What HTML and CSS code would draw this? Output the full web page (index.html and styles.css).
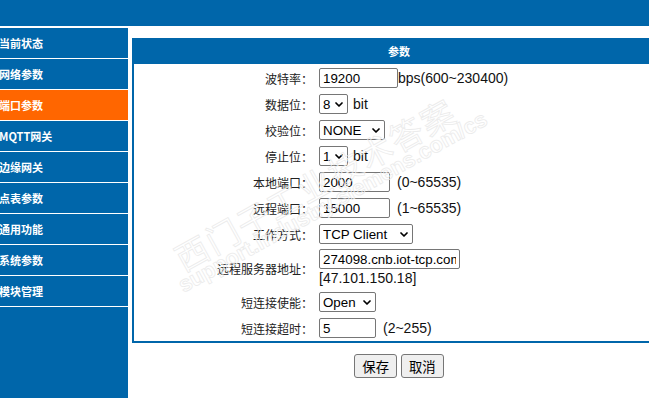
FILE: index.html
```html
<!DOCTYPE html>
<html lang="zh-CN">
<head>
<meta charset="utf-8">
<title>端口参数</title>
<link rel="stylesheet" href="styles.css">
</head>
<body>
<div class="topbar"></div>
<div class="layout">
  <nav class="sidebar">
    <div class="nav-item">当前状态</div>
    <div class="nav-item">网络参数</div>
    <div class="nav-item active">端口参数</div>
    <div class="nav-item">MQTT网关</div>
    <div class="nav-item">边缘网关</div>
    <div class="nav-item">点表参数</div>
    <div class="nav-item">通用功能</div>
    <div class="nav-item">系统参数</div>
    <div class="nav-item">模块管理</div>
  </nav>
  <main class="content">
    <div class="panel">
      <div class="panel-head">参数</div>
      <div class="form">
        <div class="row"><div class="lbl">波特率：</div><div class="ctl"><input class="inp w79" value="19200"><span class="unit tight">bps(600~230400)</span></div></div>
        <div class="row"><div class="lbl">数据位：</div><div class="ctl"><span class="selwrap"><select class="sel w29"><option>8</option></select><svg class="chev" viewBox="0 0 8 5"><path d="M1 1L4 4L7 1"/></svg></span><span class="unit">bit</span></div></div>
        <div class="row"><div class="lbl">校验位：</div><div class="ctl"><span class="selwrap"><select class="sel w66"><option>NONE</option></select><svg class="chev" viewBox="0 0 8 5"><path d="M1 1L4 4L7 1"/></svg></span></div></div>
        <div class="row"><div class="lbl">停止位：</div><div class="ctl"><span class="selwrap"><select class="sel w29"><option>1</option></select><svg class="chev" viewBox="0 0 8 5"><path d="M1 1L4 4L7 1"/></svg></span><span class="unit">bit</span></div></div>
        <div class="row"><div class="lbl">本地端口：</div><div class="ctl"><input class="inp w71" value="2000"><span class="unit wide">(0~65535)</span></div></div>
        <div class="row"><div class="lbl">远程端口：</div><div class="ctl"><input class="inp w71" value="15000"><span class="unit wide">(1~65535)</span></div></div>
        <div class="row"><div class="lbl">工作方式：</div><div class="ctl"><span class="selwrap"><select class="sel w94"><option>TCP Client</option></select><svg class="chev" viewBox="0 0 8 5"><path d="M1 1L4 4L7 1"/></svg></span></div></div>
        <div class="row tall"><div class="lbl">远程服务器地址：</div><div class="ctl stack"><input class="inp w141" value="274098.cnb.iot-tcp.com"><span class="ip">[47.101.150.18]</span></div></div>
        <div class="row"><div class="lbl">短连接使能：</div><div class="ctl"><span class="selwrap"><select class="sel w57"><option>Open</option></select><svg class="chev" viewBox="0 0 8 5"><path d="M1 1L4 4L7 1"/></svg></span></div></div>
        <div class="row"><div class="lbl">短连接超时：</div><div class="ctl"><input class="inp w57" value="5"><span class="unit wide">(2~255)</span></div></div>
      </div>
    </div>
    <div class="actions"><button class="btn">保存</button><button class="btn">取消</button></div>
  </main>
</div>
<div class="watermark wm-cn">西门子工业技术答案</div>
<div class="watermark wm-en">support.industry.siemens.com/cs</div>
</body>
</html>
```
FILE: styles.css
```css
html, body {
  margin: 0;
  padding: 0;
  width: 649px;
  height: 398px;
  overflow: hidden;
  background: #fff;
  font-family: "Liberation Sans", Arial, "Noto Sans CJK SC", sans-serif;
  color: #222;
}
.topbar {
  height: 26px;
  background: #0066aa;
}
.layout {
  margin-top: 2px;
  display: flex;
  height: 370px;
}
.sidebar {
  width: 128px;
  flex: none;
  background: #0066aa;
}
.nav-item {
  height: 30px;
  line-height: 30px;
  border-bottom: 1px solid #fff;
  color: #fff;
  font-family: "Noto Sans CJK SC", "Liberation Sans", sans-serif;
  font-weight: bold;
  font-size: 11px;
  text-indent: -1px;
  white-space: nowrap;
  overflow: hidden;
}
.nav-item.active {
  background: #ff6600;
}
.content {
  flex: none;
  padding: 10px 0 0 4px;
  width: 540px;
}
.panel {
  width: 530px;
  border: 2px solid #0066aa;
  border-top: 0;
}
.panel-head {
  height: 26px;
  line-height: 26px;
  background: #0066aa;
  color: #fff;
  text-align: center;
  font-family: "Noto Sans CJK SC", sans-serif;
  font-weight: bold;
  font-size: 11px;
}
.form {
  padding-top: 1px;
}
.row {
  display: grid;
  grid-template-columns: 179px 1fr;
  column-gap: 6px;
  height: 26px;
  align-items: center;
}
.row.tall {
  height: 42px;
}
.lbl {
  text-align: right;
  font-family: "Noto Sans CJK SC", sans-serif;
  font-size: 12px;
  color: #222;
  white-space: nowrap;
}
.ctl {
  display: flex;
  align-items: center;
  font-size: 14px;
  white-space: nowrap;
}
.ctl.stack {
  flex-direction: column;
  align-items: flex-start;
}
.inp {
  box-sizing: border-box;
  height: 20px;
  margin: 0;
  padding: 0 3px;
  border: 1px solid #767676;
  border-radius: 2px;
  font-family: "Liberation Sans", Arial, sans-serif;
  font-size: 13.33px;
  color: #000;
  background: #fff;
}
.selwrap {
  position: relative;
  display: inline-flex;
}
.sel {
  -webkit-appearance: none;
  appearance: none;
  box-sizing: border-box;
  height: 20px;
  margin: 0;
  padding: 0 12px 0 3px;
  border: 1px solid #767676;
  border-radius: 2px;
  font-family: "Liberation Sans", Arial, sans-serif;
  font-size: 13.33px;
  color: #000;
  background: #fff;
}
.chev {
  position: absolute;
  right: 5px;
  top: 8px;
  width: 8px;
  height: 5px;
  fill: none;
  stroke: #000;
  stroke-width: 1.7;
  stroke-linecap: round;
  stroke-linejoin: round;
  pointer-events: none;
}
.w29 { width: 29px; }
.w57 { width: 57px; }
.w66 { width: 66px; }
.w71 { width: 71px; }
.w79 { width: 79px; }
.w94 { width: 94px; }
.w141 { width: 141px; }
.unit {
  margin-left: 5px;
  color: #111;
}
.unit.tight { margin-left: 0; }
.unit.wide { margin-left: 7px; }
.ip {
  font-size: 14px;
  line-height: 18px;
  color: #111;
}
.actions {
  width: 534px;
  margin-top: 11px;
  display: flex;
  justify-content: center;
  gap: 4px;
}
.btn {
  box-sizing: border-box;
  height: 24px;
  padding: 0 7px;
  margin: 0;
  border: 1px solid #767676;
  border-radius: 3px;
  background: #efefef;
  font-family: "Noto Sans CJK SC", sans-serif;
  font-size: 13.33px;
  color: #000;
}
.watermark {
  position: absolute;
  transform-origin: 0 50%;
  transform: rotate(-29deg);
  white-space: nowrap;
  color: rgba(255, 255, 255, 0);
  -webkit-text-stroke: 0.8px #ebebeb;
  pointer-events: none;
}
.wm-cn {
  left: 177px;
  top: 243px;
  font-family: "Noto Sans CJK SC", sans-serif;
  font-size: 33px;
  line-height: 34px;
  letter-spacing: 2px;
}
.wm-en {
  left: 180px;
  top: 275px;
  font-family: "Liberation Sans", Arial, sans-serif;
  font-weight: bold;
  font-size: 22px;
  line-height: 24px;
}
```
